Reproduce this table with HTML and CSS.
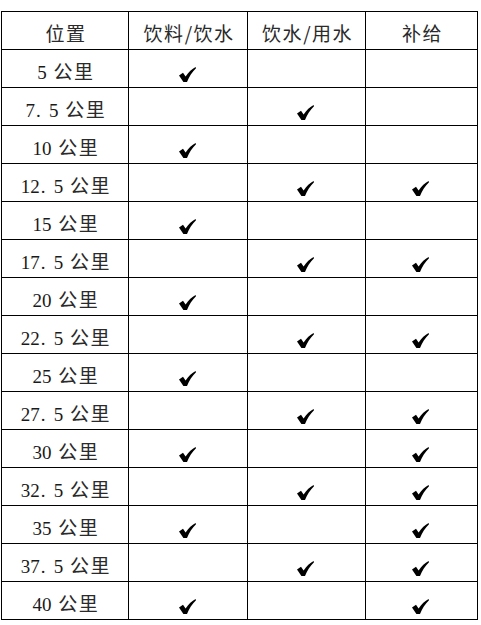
FILE: index.html
```html
<!DOCTYPE html>
<html lang="zh">
<head>
<meta charset="utf-8">
<link rel="stylesheet" href="styles.css">
</head>
<body>
<svg class="defs" width="0" height="0" aria-hidden="true">
  <symbol id="chk" viewBox="0 0 17 15">
    <path d="M0 8.6 L4 5.8 L6.6 9.4 C9.5 5.2 13 1.8 16.6 0 L17 1.2 C13.2 5 10 9.6 8 15 L4.4 15 Z"/>
  </symbol>
</svg>
<table class="grid">
  <colgroup>
    <col class="c1"><col class="c2"><col class="c3"><col class="c4">
  </colgroup>
  <thead>
    <tr><th>位置</th><th>饮料<span class="sl">/</span>饮水</th><th>饮水<span class="sl">/</span>用水</th><th>补给</th></tr>
  </thead>
  <tbody>
    <tr><td><span class="n">5</span> 公里</td><td class="m"><svg class="ck"><use href="#chk"/></svg></td><td></td><td></td></tr>
    <tr><td><span class="n">7<span class="dot">.</span>5</span> 公里</td><td></td><td class="m"><svg class="ck"><use href="#chk"/></svg></td><td></td></tr>
    <tr><td><span class="n">10</span> 公里</td><td class="m"><svg class="ck"><use href="#chk"/></svg></td><td></td><td></td></tr>
    <tr><td><span class="n">12<span class="dot">.</span>5</span> 公里</td><td></td><td class="m"><svg class="ck"><use href="#chk"/></svg></td><td class="m"><svg class="ck"><use href="#chk"/></svg></td></tr>
    <tr><td><span class="n">15</span> 公里</td><td class="m"><svg class="ck"><use href="#chk"/></svg></td><td></td><td></td></tr>
    <tr><td><span class="n">17<span class="dot">.</span>5</span> 公里</td><td></td><td class="m"><svg class="ck"><use href="#chk"/></svg></td><td class="m"><svg class="ck"><use href="#chk"/></svg></td></tr>
    <tr><td><span class="n">20</span> 公里</td><td class="m"><svg class="ck"><use href="#chk"/></svg></td><td></td><td></td></tr>
    <tr><td><span class="n">22<span class="dot">.</span>5</span> 公里</td><td></td><td class="m"><svg class="ck"><use href="#chk"/></svg></td><td class="m"><svg class="ck"><use href="#chk"/></svg></td></tr>
    <tr><td><span class="n">25</span> 公里</td><td class="m"><svg class="ck"><use href="#chk"/></svg></td><td></td><td></td></tr>
    <tr><td><span class="n">27<span class="dot">.</span>5</span> 公里</td><td></td><td class="m"><svg class="ck"><use href="#chk"/></svg></td><td class="m"><svg class="ck"><use href="#chk"/></svg></td></tr>
    <tr><td><span class="n">30</span> 公里</td><td class="m"><svg class="ck"><use href="#chk"/></svg></td><td></td><td class="m"><svg class="ck"><use href="#chk"/></svg></td></tr>
    <tr><td><span class="n">32<span class="dot">.</span>5</span> 公里</td><td></td><td class="m"><svg class="ck"><use href="#chk"/></svg></td><td class="m"><svg class="ck"><use href="#chk"/></svg></td></tr>
    <tr><td><span class="n">35</span> 公里</td><td class="m"><svg class="ck"><use href="#chk"/></svg></td><td></td><td class="m"><svg class="ck"><use href="#chk"/></svg></td></tr>
    <tr><td><span class="n">37<span class="dot">.</span>5</span> 公里</td><td></td><td class="m"><svg class="ck"><use href="#chk"/></svg></td><td class="m"><svg class="ck"><use href="#chk"/></svg></td></tr>
    <tr><td><span class="n">40</span> 公里</td><td class="m"><svg class="ck"><use href="#chk"/></svg></td><td></td><td class="m"><svg class="ck"><use href="#chk"/></svg></td></tr>
  </tbody>
</table>
</body>
</html>
```

FILE: styles.css
```css
html, body {
  margin: 0;
  padding: 0;
  background: #fff;
}
body {
  padding: 11px 0 0 1px;
}
.defs {
  position: absolute;
  width: 0;
  height: 0;
}
.grid {
  border-collapse: collapse;
  table-layout: fixed;
  width: 477px;
  font-family: "Noto Sans CJK SC", sans-serif;
  font-size: 19px;
  font-weight: 400;
  color: #2a2a2a;
}
.c1 { width: 127px; }
.c2 { width: 119px; }
.c3 { width: 118px; }
.c4 { width: 112px; }
.grid th,
.grid td {
  border: 1px solid #000;
  height: 38px;
  box-sizing: border-box;
  padding: 6px 0 0 2px;
  text-align: center;
  vertical-align: middle;
  font-weight: 400;
  letter-spacing: 1.5px;
  word-spacing: 1px;
  line-height: 22px;
  white-space: nowrap;
}
.grid th {
  padding-top: 4px;
}
.grid td.m {
  padding-left: 0;
}
.n {
  font-family: "Liberation Serif", "Times New Roman", serif;
  font-size: 19px;
  letter-spacing: 0;
  color: #1a1a1a;
}
.dot {
  display: inline-block;
  width: 14px;
  padding-left: 1px;
  box-sizing: border-box;
  text-align: left;
}
.sl {
  display: inline-block;
  width: 8px;
  text-align: center;
  letter-spacing: 0;
  margin-right: 1px;
}
.ck {
  width: 17px;
  height: 15px;
  fill: #000;
  vertical-align: middle;
  margin-left: -2px;
}
```
